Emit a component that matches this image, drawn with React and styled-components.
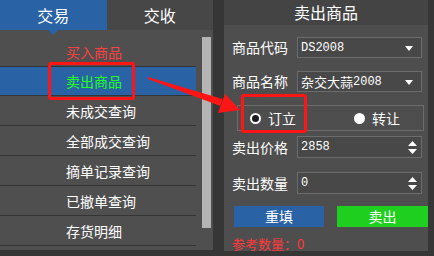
import React from 'react';
import styled, { createGlobalStyle } from 'styled-components';

const GlobalStyle = createGlobalStyle`
  * {
    margin: 0;
    padding: 0;
    box-sizing: border-box;
  }

  body {
    font-family: "Noto Sans CJK SC", "Noto Sans", sans-serif;
    background: #363636;
    color: #ffffff;
    overflow: hidden;
  }
`;

const Screen = styled.div`
  position: relative;
  width: 434px;
  height: 256px;
  background: #363636;
  display: flex;
  align-items: flex-start;
`;

const LeftPanel = styled.div`
  width: 213px;
  height: 250px;
  background: #4f4f4f;
  display: flex;
  flex-direction: column;
`;

const TabBar = styled.div`
  height: 30px;
  display: flex;
  background: #474747;
`;

const Tab = styled.div`
  position: relative;
  flex: 1;
  display: flex;
  align-items: center;
  justify-content: center;
  font-size: 16px;
  line-height: 30px;
  background: ${p => (p.active ? '#2a62a6' : 'transparent')};

  &::after {
    content: '';
    display: ${p => (p.active ? 'block' : 'none')};
    position: absolute;
    left: 50%;
    bottom: -5px;
    margin-left: -5px;
    border-left: 5px solid transparent;
    border-right: 5px solid transparent;
    border-top: 5px solid #2a62a6;
  }
`;

const ListArea = styled.div`
  flex: 1;
  display: flex;
  padding-top: 7px;
`;

const List = styled.div`
  width: 196px;
  display: flex;
  flex-direction: column;
`;

const Row = styled.div`
  height: 30px;
  padding-left: 66px;
  display: flex;
  align-items: center;
  font-size: 14px;
  border-bottom: 1px solid #343434;
  color: ${p => p.color || '#ffffff'};
  background: ${p => (p.selected ? '#2a62a6' : 'transparent')};
  ${p => p.selected && 'border-top: 1px solid #343434; margin-top: -1px;'}
`;

const ScrollThumb = styled.div`
  width: 9px;
  height: 191px;
  margin-left: 6px;
  background: #b4b4b4;
`;

const RightPanel = styled.div`
  width: 204px;
  height: 251px;
  margin-left: 11px;
  background: #4e4e4e;
  display: flex;
  flex-direction: column;
`;

const Header = styled.div`
  height: 25px;
  background: #444444;
  text-align: center;
  font-size: 16px;
  line-height: 25px;
`;

const Form = styled.div`
  display: flex;
  flex-direction: column;
  padding: 12px 6px 0 8px;
`;

const FieldRow = styled.div`
  display: flex;
  align-items: center;
  height: ${p => p.h || 21}px;
  margin-bottom: ${p => p.mb || 0}px;
`;

const Label = styled.div`
  width: 65px;
  font-size: 14px;
  line-height: 21px;
  white-space: nowrap;
`;

const Field = styled.div`
  position: relative;
  width: 125px;
  height: 100%;
  border: 1px solid #6c6c6c;
  background: #484848;
  padding: ${p => (p.top ? '1px 0 0 3px' : '0 0 0 3px')};
  display: flex;
  align-items: ${p => (p.top ? 'flex-start' : 'center')};
  font-size: 13px;
  line-height: 18px;
`;

const Mono = styled.span`
  font-family: "Liberation Mono", monospace;
  font-size: 12px;
`;

const Caret = styled.div`
  position: absolute;
  right: 8px;
  top: 8px;
  border-left: 4px solid transparent;
  border-right: 4px solid transparent;
  border-top: 5px solid #ffffff;
`;

const Spin = styled.svg`
  position: absolute;
  right: 4px;
  top: 4px;
`;

const RadioBox = styled.div`
  height: 26px;
  margin: 0 -2px 5px 5px;
  border: 1px solid #6c6c6c;
  display: flex;
  align-items: center;
  font-size: 14px;
`;

const RadioItem = styled.div`
  display: flex;
  align-items: center;
  gap: 7px;
  margin-left: ${p => p.ml}px;
`;

const Dot = styled.span`
  width: 11px;
  height: 11px;
  border-radius: 50%;
  background: ${p => (p.filled ? '#ffffff' : '#1c1c1c')};
  border: ${p => (p.filled ? 'none' : '2px solid #ffffff')};
`;

const ButtonRow = styled.div`
  display: flex;
  justify-content: space-between;
  margin: 12px -6px 0 2px;
`;

const Button = styled.div`
  width: ${p => p.w}px;
  height: 21px;
  background: ${p => p.bg};
  font-size: 14px;
  line-height: 21px;
  text-align: center;
`;

const RefText = styled.div`
  margin-top: 7px;
  font-size: 13px;
  color: #ff3a3a;
`;

const Mark = styled.div`
  position: absolute;
  left: ${p => p.x}px;
  top: ${p => p.y}px;
  width: ${p => p.w}px;
  height: ${p => p.h}px;
  border: 3px solid #ff1515;
  border-radius: 3px;
  pointer-events: none;
`;

const Overlay = styled.svg`
  position: absolute;
  left: 0;
  top: 0;
  pointer-events: none;
`;

const SpinIcon = () => (
  <Spin width="9" height="13" viewBox="0 0 9 13">
    <path d="M4.5 0 L9 5 L0 5 Z M0 8 L9 8 L4.5 13 Z" fill="#ffffff" />
  </Spin>
);

const rows = [
  { text: '买入商品', color: '#ff4040' },
  { text: '卖出商品', color: '#22ff22', selected: true },
  { text: '未成交查询' },
  { text: '全部成交查询' },
  { text: '摘单记录查询' },
  { text: '已撤单查询' },
  { text: '存货明细' },
];

function App() {
  return (
    <>
      <GlobalStyle />
      <Screen>
        <LeftPanel>
          <TabBar>
            <Tab active>交易</Tab>
            <Tab>交收</Tab>
          </TabBar>
          <ListArea>
            <List>
              {rows.map(r => (
                <Row key={r.text} color={r.color} selected={r.selected}>
                  {r.text}
                </Row>
              ))}
            </List>
            <ScrollThumb />
          </ListArea>
        </LeftPanel>

        <RightPanel>
          <Header>卖出商品</Header>
          <Form>
            <FieldRow mb={13}>
              <Label>商品代码</Label>
              <Field>
                <Mono>DS2008</Mono>
                <Caret />
              </Field>
            </FieldRow>
            <FieldRow mb={13}>
              <Label>商品名称</Label>
              <Field>
                杂交大蒜<Mono>2008</Mono>
                <Caret />
              </Field>
            </FieldRow>
            <RadioBox>
              <RadioItem ml={12}>
                <Dot />
                订立
              </RadioItem>
              <RadioItem ml={58}>
                <Dot filled />
                转让
              </RadioItem>
            </RadioBox>
            <FieldRow h={22} mb={14}>
              <Label>卖出价格</Label>
              <Field top>
                <Mono>2858</Mono>
                <SpinIcon />
              </Field>
            </FieldRow>
            <FieldRow h={22}>
              <Label>卖出数量</Label>
              <Field top>
                <Mono>0</Mono>
                <SpinIcon />
              </Field>
            </FieldRow>
            <ButtonRow>
              <Button w={90} bg="#2a62a6">重填</Button>
              <Button w={91} bg="#1fcf1f">卖出</Button>
            </ButtonRow>
            <RefText>参考数量：0</RefText>
          </Form>
        </RightPanel>

        <Mark x={48} y={62} w={87} h={38} />
        <Mark x={241} y={94} w={66} h={39} />
        <Overlay width="434" height="256" viewBox="0 0 434 256">
          <polygon points="148,77 222.6,99 220.4,106 148,79" fill="#ff1515" />
          <polygon points="240,110 218,113 225,94" fill="#ff1515" />
        </Overlay>
      </Screen>
    </>
  );
}

export default App;
